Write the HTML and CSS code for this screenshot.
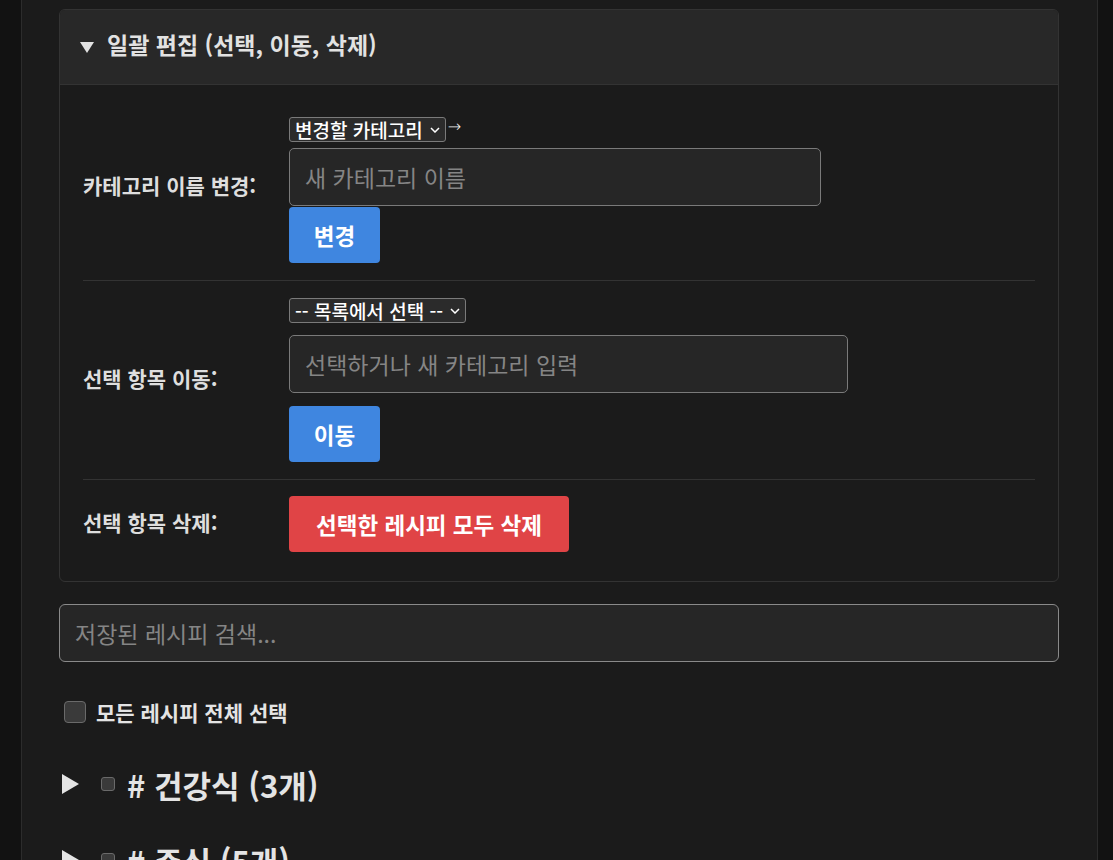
FILE: index.html
```html
<!DOCTYPE html>
<html lang="ko">
<head>
<meta charset="utf-8">
<title>레시피</title>
<link rel="stylesheet" href="styles.css">
</head>
<body>
<div class="app">
  <section class="panel">
    <div class="panel-head"><span class="tri-down"></span><span>일괄 편집 (선택, 이동, 삭제)</span></div>
    <div class="panel-body">
      <div class="row">
        <div class="label label-first">카테고리 이름 변경:</div>
        <div class="field">
          <div class="select-line">
            <div class="sel" role="combobox"><span>변경할 카테고리</span><svg class="chev" width="10" height="6" viewBox="0 0 10 6"><polyline points="1,1 5,5 9,1" fill="none" stroke="#fff" stroke-width="1.5"/></svg></div>
            <span class="arrow">→</span>
          </div>
          <input class="txt txt-rename" type="text" placeholder="새 카테고리 이름">
          <button class="btn btn-blue btn-rename">변경</button>
        </div>
      </div>
      <div class="row">
        <div class="label">선택 항목 이동:</div>
        <div class="field">
          <div class="select-line">
            <div class="sel" role="combobox"><span>-- 목록에서 선택 --</span><svg class="chev" width="10" height="6" viewBox="0 0 10 6"><polyline points="1,1 5,5 9,1" fill="none" stroke="#fff" stroke-width="1.5"/></svg></div>
          </div>
          <input class="txt txt-move" type="text" placeholder="선택하거나 새 카테고리 입력">
          <button class="btn btn-blue btn-move">이동</button>
        </div>
      </div>
      <div class="row row-last">
        <div class="label">선택 항목 삭제:</div>
        <div class="field">
          <button class="btn btn-red">선택한 레시피 모두 삭제</button>
        </div>
      </div>
    </div>
  </section>

  <input class="search" type="text" placeholder="저장된 레시피 검색...">

  <label class="select-all"><span class="cb"></span><span>모든 레시피 전체 선택</span></label>

  <div class="cat"><span class="tri-right"></span><span class="cb-small"></span><span class="cat-title"># 건강식 (3개)</span></div>
  <div class="cat"><span class="tri-right"></span><span class="cb-small"></span><span class="cat-title"># 주식 (5개)</span></div>
</div>
</body>
</html>
```

FILE: styles.css
```css
* { box-sizing: border-box; }
html, body { margin: 0; padding: 0; }
body {
  background: #121212;
  font-family: "Noto Sans CJK KR", "Noto Sans", sans-serif;
  color: #e0e0e0;
  height: 860px;
  overflow: hidden;
}
.app {
  margin-left: 21px;
  width: 1077px;
  min-height: 900px;
  background: #1b1b1b;
  border-left: 1px solid #2c2c2c;
  border-right: 1px solid #2c2c2c;
  padding: 9px 38px 0 37px;
}
.panel {
  border: 1px solid #333;
  border-radius: 6px;
  overflow: hidden;
}
.panel-head {
  height: 75px;
  background: #282828;
  border-bottom: 1px solid #333;
  display: flex;
  align-items: center;
  padding: 0 20px 6px;
  font-size: 23px;
  font-weight: 700;
  color: #e2e2e2;
}
.tri-down {
  width: 0; height: 0;
  border-left: 7px solid transparent;
  border-right: 7px solid transparent;
  border-top: 11px solid #e2e2e2;
  margin-right: 13px;
  margin-top: 7px;
}
.panel-body {
  padding: 15px 23px 13px;
}
.row {
  display: grid;
  grid-template-columns: 206px 1fr;
  align-items: center;
  padding: 17px 0;
  border-bottom: 1px solid #333;
}
.row-last { border-bottom: none; padding: 16px 0; }
.label {
  font-size: 21px;
  font-weight: 700;
  color: #dedede;
  margin-bottom: 4px;
}
.label-first { margin-bottom: 10px; }
.field { display: flex; flex-direction: column; align-items: flex-start; }
.select-line { display: flex; align-items: flex-start; height: 25px; }
.sel {
  display: flex;
  align-items: center;
  height: 25px;
  padding: 0 5px 0 5px;
  font-size: 19px;
  font-weight: 500;
  line-height: 23px;
  color: #fff;
  background: #2b2b2b;
  border: 1px solid #7a7a7a;
  border-radius: 3px;
  white-space: nowrap;
}
.chev { margin-left: 7px; margin-top: 1px; }
.arrow {
  color: #f2f2f2;
  font-size: 16px;
  font-weight: 300;
  line-height: 16px;
  margin-top: 2px;
  margin-left: 2px;
  font-family: "DejaVu Sans", sans-serif;
}
.txt {
  height: 58px;
  background: #262626;
  border: 1px solid #7a7a7a;
  border-radius: 5px;
  padding: 0 15px;
  font-family: inherit;
  font-size: 23px;
  color: #e0e0e0;
  outline: none;
}
.txt::placeholder, .search::placeholder { color: #858585; }
.txt-rename { width: 532px; margin-top: 6px; }
.txt-move { width: 559px; margin-top: 12px; }
.btn {
  height: 56px;
  border: none;
  border-radius: 4px;
  color: #fff;
  font-family: inherit;
  font-size: 22.5px;
  font-weight: 700;
  padding: 0;
}
.btn-blue { background: #3f86e0; width: 91px; }
.btn-rename { margin-top: 1px; }
.btn-move { margin-top: 13px; }
.btn-red { background: #e04446; width: 280px; }
.search {
  display: block;
  width: 100%;
  height: 58px;
  margin-top: 22px;
  background: #262626;
  border: 1px solid #8a8a8a;
  border-radius: 6px;
  padding: 0 15px;
  font-family: inherit;
  font-size: 23px;
  color: #e0e0e0;
  outline: none;
}
.select-all {
  display: flex;
  align-items: center;
  margin-top: 35px;
  margin-left: 5px;
  font-size: 21px;
  font-weight: 700;
  color: #e4e4e4;
}
.cb {
  width: 22px; height: 22px;
  border: 1px solid #6a6a6a;
  border-radius: 4px;
  background: #3a3a3a;
  margin-right: 10px;
}
.cat {
  display: flex;
  align-items: center;
  height: 76px;
  margin-left: 3px;
}
.select-all + .cat { margin-top: 19px; }
.tri-right {
  width: 0; height: 0;
  border-top: 10px solid transparent;
  border-bottom: 10px solid transparent;
  border-left: 17px solid #e4e4e4;
  margin-right: 22px;
}
.cb-small {
  width: 14px; height: 14px;
  border: 1px solid #6a6a6a;
  border-radius: 3px;
  background: #3a3a3a;
  margin-right: 12px;
}
.cat-title {
  font-size: 31px;
  font-weight: 700;
  color: #e4e4e4;
}
```
